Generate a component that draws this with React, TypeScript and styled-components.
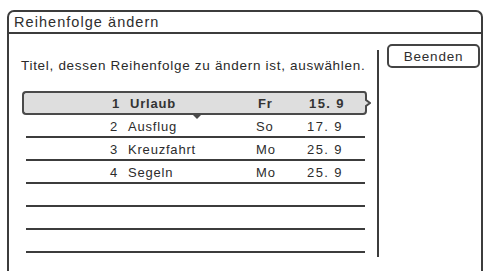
import styled, { createGlobalStyle } from "styled-components";

const GlobalStyle = createGlobalStyle`
  html, body {
    margin: 0;
    padding: 0;
    background: #ffffff;
  }
  body {
    font-family: "Liberation Sans", Arial, sans-serif;
    color: #2a2a2a;
  }
`;

type Entry = {
  no: number;
  name: string;
  day: string;
  date: string;
};

const entries: Entry[] = [
  { no: 1, name: "Urlaub", day: "Fr", date: "15. 9" },
  { no: 2, name: "Ausflug", day: "So", date: "17. 9" },
  { no: 3, name: "Kreuzfahrt", day: "Mo", date: "25. 9" },
  { no: 4, name: "Segeln", day: "Mo", date: "25. 9" },
];

const EMPTY_ROWS = 3;

function App() {
  return (
    <>
      <GlobalStyle />
      <Frame>
        <TitleBar>Reihenfolge ändern</TitleBar>
        <Body>
          <Main>
            <Hint>Titel, dessen Reihenfolge zu ändern ist, auswählen.</Hint>
            <List>
              {entries.map((e, i) => (
                <Row key={e.no} $selected={i === 0}>
                  <No>{e.no}</No>
                  <Name>{e.name}</Name>
                  <Day>{e.day}</Day>
                  <DateCell>{e.date}</DateCell>
                  {i === 0 && (
                    <>
                      <Chevron width="9" height="24" viewBox="0 0 9 24">
                        <path
                          d="M0 1 L2 1 Q4 1 4 4 L4 9 L8 12 L4 15 L4 20 Q4 23 1 23 L0 23 Z"
                          fill="#dedede"
                          stroke="none"
                        />
                        <path
                          d="M0 1 L2 1 Q4 1 4 4 L4 9 L8 12 L4 15 L4 20 Q4 23 1 23 L0 23"
                          fill="none"
                          stroke="#4a4a4a"
                          strokeWidth="2"
                        />
                      </Chevron>
                      <Notch width="10" height="6" viewBox="0 0 10 6">
                        <path d="M0 0 L5 5 L10 0" fill="#4a4a4a" />
                      </Notch>
                    </>
                  )}
                </Row>
              ))}
              {Array.from({ length: EMPTY_ROWS }).map((_, i) => (
                <Row key={"empty" + i} $selected={false} />
              ))}
            </List>
          </Main>
          <Divider />
          <Side>
            <Button>Beenden</Button>
          </Side>
        </Body>
      </Frame>
    </>
  );
}

export default App;

const Frame = styled.div`
  margin: 10px 0 0 7px;
  width: 476px;
  height: 261px;
  border: 2px solid #3c3c3c;
  border-bottom: none;
  border-radius: 7px 7px 0 0;
  display: flex;
  flex-direction: column;
  box-sizing: border-box;
`;

const TitleBar = styled.div`
  height: 20px;
  line-height: 20px;
  padding-left: 5px;
  border-bottom: 2px solid #3c3c3c;
  font-size: 14.5px;
  letter-spacing: 1.05px;
  color: #2e2e2e;
`;

const Body = styled.div`
  display: flex;
  flex: 1;
`;

const Main = styled.div`
  width: 368px;
  display: flex;
  flex-direction: column;
`;

const Hint = styled.div`
  margin-top: 23px;
  padding-left: 12px;
  height: 18px;
  line-height: 18px;
  font-size: 13.5px;
  letter-spacing: 0.7px;
  white-space: nowrap;
  color: #2a2a2a;
`;

const List = styled.div`
  margin-top: 16px;
  padding-left: 17px;
  width: 339px;
  display: flex;
  flex-direction: column;
`;

const Row = styled.div<{ $selected: boolean }>`
  position: relative;
  display: flex;
  align-items: center;
  box-sizing: border-box;
  font-size: 13px;
  letter-spacing: 0.8px;
  font-weight: ${({ $selected }) => ($selected ? 700 : 400)};
  color: ${({ $selected }) => ($selected ? "#333333" : "#2c2c2c")};
  ${({ $selected }) =>
    $selected
      ? `
    height: 24px;
    margin: 0 3px 0 -4px;
    padding-left: 4px;
    background: #dedede;
    border: 2px solid #4a4a4a;
    border-right: none;
    border-radius: 4px 0 0 4px;
  `
      : `
    height: 23px;
    border-bottom: 2px solid #3c3c3c;
    padding-top: 1px;
  `}
`;

const No = styled.span`
  width: 92px;
  text-align: right;
`;

const Name = styled.span`
  margin-left: 10px;
  width: 128px;
`;

const Day = styled.span`
  width: 51px;
`;

const DateCell = styled.span`
  letter-spacing: 1.4px;
  white-space: pre;
`;

const Chevron = styled.svg`
  position: absolute;
  right: -9px;
  top: -2px;
`;

const Notch = styled.svg`
  position: absolute;
  left: 168px;
  bottom: -7px;
`;

const Divider = styled.div`
  margin-top: 16px;
  width: 2px;
  height: 207px;
  background: #3c3c3c;
`;

const Side = styled.div`
  flex: 1;
  padding: 10px 0 0 8px;
`;

const Button = styled.div`
  width: 93px;
  height: 24px;
  box-sizing: border-box;
  border: 2px solid #444444;
  border-radius: 5px;
  display: flex;
  align-items: center;
  justify-content: center;
  font-size: 13.5px;
  letter-spacing: 0.8px;
  color: #2e2e2e;
`;
